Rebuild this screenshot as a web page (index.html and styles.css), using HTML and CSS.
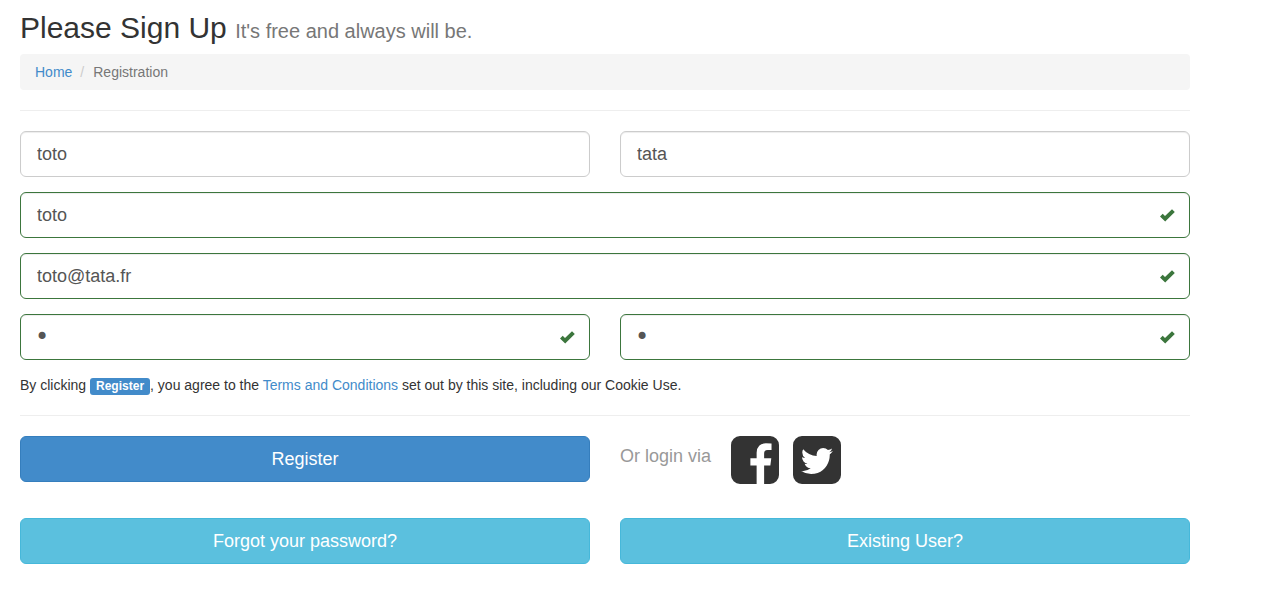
FILE: index.html
```html
<!DOCTYPE html>
<html lang="en">
<head>
<meta charset="utf-8">
<meta name="viewport" content="width=device-width, initial-scale=1">
<title>Please Sign Up</title>
<link rel="stylesheet" href="styles.css">
</head>
<body>
<svg class="sprite" aria-hidden="true">
  <symbol id="check" viewBox="0 0 15 15">
    <path d="M0 8.4 L2.7 5.7 L5 8 L12 1.2 L14.8 4 L5.2 13.6 Z"/>
  </symbol>
</svg>
<main class="container">
  <h1 class="title">Please Sign Up <small>It's free and always will be.</small></h1>
  <nav aria-label="Breadcrumb">
    <ol class="breadcrumb">
      <li><a href="#">Home</a></li>
      <li aria-current="page">Registration</li>
    </ol>
  </nav>
  <hr>
  <form>
    <div class="row">
      <div class="field"><input class="control" type="text" aria-label="First name" value="toto"></div>
      <div class="field"><input class="control" type="text" aria-label="Last name" value="tata"></div>
    </div>
    <div class="field valid">
      <input class="control" type="text" aria-label="Display name" value="toto">
      <svg class="check" aria-hidden="true"><use href="#check"/></svg>
    </div>
    <div class="field valid">
      <input class="control" type="email" aria-label="Email address" value="toto@tata.fr">
      <svg class="check" aria-hidden="true"><use href="#check"/></svg>
    </div>
    <div class="row">
      <div class="field valid">
        <input class="control password" type="password" aria-label="Password" value="a">
        <svg class="check" aria-hidden="true"><use href="#check"/></svg>
      </div>
      <div class="field valid">
        <input class="control password" type="password" aria-label="Confirm password" value="a">
        <svg class="check" aria-hidden="true"><use href="#check"/></svg>
      </div>
    </div>
    <p class="terms">By clicking <strong class="label">Register</strong>, you agree to the <a href="#">Terms and Conditions</a> set out by this site, including our Cookie Use.</p>
    <hr>
    <div class="row actions">
      <button class="btn primary" type="submit">Register</button>
      <div class="social">
        <span class="via">Or login via</span>
        <a href="#" aria-label="Facebook"><svg class="brand" viewBox="0 128 1536 1536" aria-hidden="true"><path d="M1248 128q119 0 203.5 84.5t84.5 203.5v960q0 119-84.5 203.5t-203.5 84.5h-188v-595h199l30-232h-229v-148q0-56 23.5-84t91.5-28l122-1v-207q-63-9-178-9-136 0-217.5 80t-81.5 226v171h-200v232h200v595h-532q-119 0-203.5-84.5t-84.5-203.5v-960q0-119 84.5-203.5t203.5-84.5h960z"/></svg></a>
        <a href="#" aria-label="Twitter"><svg class="brand" viewBox="0 128 1536 1536" aria-hidden="true"><path d="M1280 610q-56 25-121 34 68-40 93-117-65 38-134 51-61-66-153-66-87 0-148.5 61.5t-61.5 148.5q0 29 5 48-129-7-242-65t-192-155q-29 50-29 106 0 114 91 175-47-1-100-26v2q0 75 50 133.5t123 72.5q-29 8-51 8-13 0-39-4 21 63 74.5 104t121.5 42q-116 90-261 90-26 0-50-3 148 94 322 94 112 0 210-35.5t168-95 120.5-137 75-162 24.5-168.5q0-18-1-27 63-45 105-109zm256-194v960q0 119-84.5 203.5t-203.5 84.5h-960q-119 0-203.5-84.5t-84.5-203.5v-960q0-119 84.5-203.5t203.5-84.5h960q119 0 203.5 84.5t84.5 203.5z"/></svg></a>
      </div>
    </div>
    <div class="row">
      <a class="btn info" href="#">Forgot your password?</a>
      <a class="btn info" href="#">Existing User?</a>
    </div>
  </form>
</main>
</body>
</html>
```
FILE: styles.css
```css
* {
  box-sizing: border-box;
}

body {
  margin: 0;
  background: #fff;
  color: #333;
  font: 14px/20px "Liberation Sans", Arial, sans-serif;
}

a {
  color: #428bca;
  text-decoration: none;
}

.sprite {
  display: none;
}

.container {
  max-width: 1210px;
  padding: 11px 20px 40px;
}

.title {
  margin: 0 0 10px;
  font-size: 30px;
  font-weight: 400;
  line-height: 33px;
}

.title small {
  color: #777;
  font-size: 20px;
  line-height: 20px;
}

.breadcrumb {
  display: flex;
  margin: 0;
  padding: 8px 15px;
  border-radius: 4px;
  background: #f5f5f5;
  color: #777;
  list-style: none;
}

.breadcrumb li + li::before {
  padding: 0 9px 0 8px;
  color: #ccc;
  content: "/";
}

hr {
  margin: 20px 0;
  border: 0;
  border-top: 1px solid #eee;
}

.row {
  display: grid;
  grid-template-columns: 1fr 1fr;
  column-gap: 30px;
}

.field {
  position: relative;
  margin-bottom: 15px;
}

.control {
  display: block;
  width: 100%;
  height: 46px;
  padding: 10px 16px;
  border: 1px solid #ccc;
  border-radius: 6px;
  background: #fff;
  box-shadow: inset 0 1px 1px rgba(0, 0, 0, 0.075);
  color: #555;
  font: 18px/24px "Liberation Sans", Arial, sans-serif;
}

.valid .control {
  padding-right: 46px;
  border-color: #3c763d;
}

.password {
  padding-left: 14px;
  font-family: "DejaVu Sans", sans-serif;
  font-size: 24px;
}

.check {
  position: absolute;
  top: 16px;
  right: 15px;
  width: 15px;
  height: 15px;
  fill: #3c763d;
}

.terms {
  margin: 0;
}

.label {
  display: inline-block;
  padding: 3px 6px;
  border-radius: 3px;
  background: #428bca;
  color: #fff;
  font-size: 12px;
  line-height: 11px;
}

.btn {
  height: 46px;
  padding: 10px 16px;
  border: 1px solid;
  border-radius: 6px;
  color: #fff;
  font: 18px/24px "Liberation Sans", Arial, sans-serif;
  text-align: center;
  cursor: pointer;
}

.primary {
  border-color: #357ebd;
  background: #428bca;
}

.info {
  border-color: #46b8da;
  background: #5bc0de;
}

.actions {
  margin-bottom: 34px;
}

.social {
  display: flex;
  gap: 14px;
}

.via {
  margin: 8px 6px 0 0;
  color: #999;
  font-size: 18px;
  line-height: 24px;
}

.brand {
  display: block;
  width: 48px;
  height: 48px;
  fill: #333;
}
```
